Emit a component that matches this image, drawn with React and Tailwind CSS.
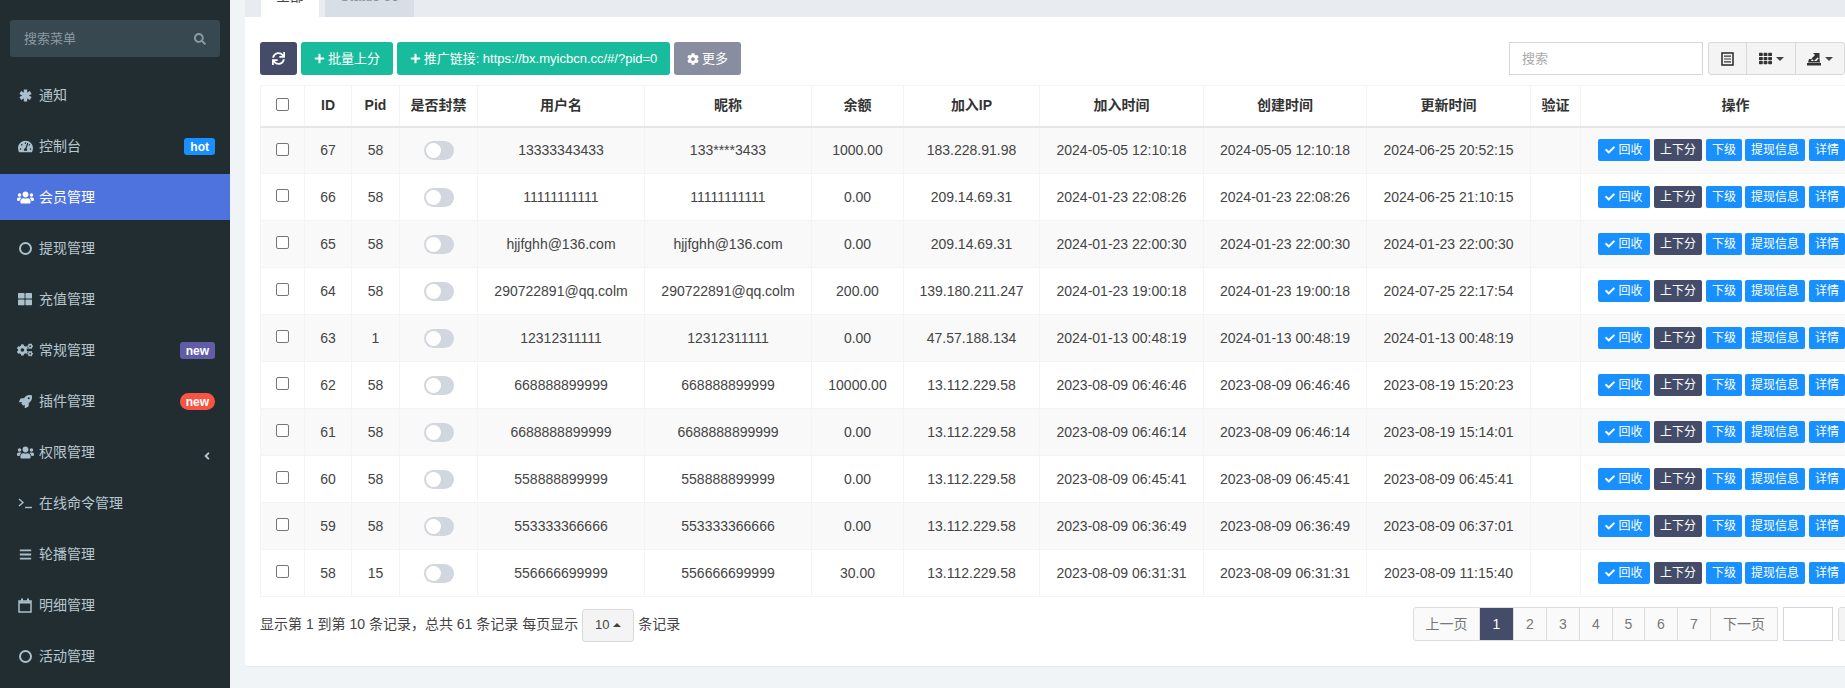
import React from 'react';
import { FaTachometerAlt, FaUsers, FaThLarge, FaCogs, FaRocket, FaBars, FaSync, FaPlus, FaCog, FaCheck, FaSearch, FaTh, FaAngleLeft } from 'react-icons/fa';

const fontStack = "font-['Liberation_Sans','Noto_Sans_CJK_SC',sans-serif]";

const Terminal = () => (
  <svg width="15" height="12" viewBox="0 0 15 12" fill="none" stroke="currentColor" strokeWidth="1.4">
    <path d="M1 2l4 3.5L1 9" />
    <path d="M7 10.5h7" />
  </svg>
);

const Asterisk = () => (
  <svg width="13" height="13" viewBox="0 0 13 13" fill="none" stroke="currentColor" strokeWidth="3.4">
    <path d="M6.5 .5v12" />
    <path d="M1.3 3.5l10.4 6" />
    <path d="M11.7 3.5l-10.4 6" />
  </svg>
);

const Ring = () => <span className="block w-[13px] h-[13px] rounded-full border-[2.5px] border-current" />;

const CalendarO = () => (
  <svg width="14" height="15" viewBox="0 0 14 15" fill="none" stroke="currentColor">
    <rect x="1" y="3" width="12" height="11" strokeWidth="1.5" />
    <path d="M1 4.5h12" strokeWidth="2" />
    <path d="M4 .5v3M10 .5v3" strokeWidth="2" />
  </svg>
);

const ListAlt = () => (
  <svg width="13" height="14" viewBox="0 0 13 14" fill="none" stroke="currentColor">
    <rect x="1" y="1" width="11" height="12" strokeWidth="1.6" />
    <path d="M3 4.2h7M3 7h7M3 9.8h7" strokeWidth="1.2" />
  </svg>
);

const ExportIcon = () => (
  <svg width="14" height="14" viewBox="0 0 14 14" fill="currentColor">
    <path d="M0 11h14v2.5H0z" />
    <path d="M2 7h3L4 9h5.5L11 7h1.5l.5 3.5H1z" />
    <path d="M4.5 6.5L8 3 6 1h6.5v6.5l-2-2L7 9z" />
  </svg>
);

const CaretDown = () => <span className="w-0 h-0 border-x-[4px] border-t-[4px] border-x-transparent border-t-[#444]" />;
const CaretUp = () => <span className="w-0 h-0 border-x-[4px] border-b-[4px] border-x-transparent border-b-[#444]" />;

const menu = [
  { label: '通知', icon: <Asterisk /> },
  { label: '控制台', icon: <FaTachometerAlt size={15} />, badge: 'hot', badgeClass: 'bg-[#1890ff] rounded-[3px] px-[6px]' },
  { label: '会员管理', icon: <FaUsers size={17} />, active: true },
  { label: '提现管理', icon: <Ring /> },
  { label: '充值管理', icon: <FaThLarge size={14} /> },
  { label: '常规管理', icon: <FaCogs size={16} />, badge: 'new', badgeClass: 'bg-[#605ca8] rounded-[3px] px-[6px]' },
  { label: '插件管理', icon: <FaRocket size={13} />, badge: 'new', badgeClass: 'bg-[#f75444] rounded-full px-[6px]' },
  { label: '权限管理', icon: <FaUsers size={17} />, chevron: true },
  { label: '在线命令管理', icon: <Terminal /> },
  { label: '轮播管理', icon: <FaBars size={13} /> },
  { label: '明细管理', icon: <CalendarO /> },
  { label: '活动管理', icon: <Ring /> },
];

const rows = [
  [67, 58, '13333343433', '133****3433', '1000.00', '183.228.91.98', '2024-05-05 12:10:18', '2024-05-05 12:10:18', '2024-06-25 20:52:15'],
  [66, 58, '11111111111', '11111111111', '0.00', '209.14.69.31', '2024-01-23 22:08:26', '2024-01-23 22:08:26', '2024-06-25 21:10:15'],
  [65, 58, 'hjjfghh@136.com', 'hjjfghh@136.com', '0.00', '209.14.69.31', '2024-01-23 22:00:30', '2024-01-23 22:00:30', '2024-01-23 22:00:30'],
  [64, 58, '290722891@qq.colm', '290722891@qq.colm', '200.00', '139.180.211.247', '2024-01-23 19:00:18', '2024-01-23 19:00:18', '2024-07-25 22:17:54'],
  [63, 1, '12312311111', '12312311111', '0.00', '47.57.188.134', '2024-01-13 00:48:19', '2024-01-13 00:48:19', '2024-01-13 00:48:19'],
  [62, 58, '668888899999', '668888899999', '10000.00', '13.112.229.58', '2023-08-09 06:46:46', '2023-08-09 06:46:46', '2023-08-19 15:20:23'],
  [61, 58, '6688888899999', '6688888899999', '0.00', '13.112.229.58', '2023-08-09 06:46:14', '2023-08-09 06:46:14', '2023-08-19 15:14:01'],
  [60, 58, '558888899999', '558888899999', '0.00', '13.112.229.58', '2023-08-09 06:45:41', '2023-08-09 06:45:41', '2023-08-09 06:45:41'],
  [59, 58, '553333366666', '553333366666', '0.00', '13.112.229.58', '2023-08-09 06:36:49', '2023-08-09 06:36:49', '2023-08-09 06:37:01'],
  [58, 15, '556666699999', '556666699999', '30.00', '13.112.229.58', '2023-08-09 06:31:31', '2023-08-09 06:31:31', '2023-08-09 11:15:40'],
];

const headers = ['ID', 'Pid', '是否封禁', '用户名', '昵称', '余额', '加入IP', '加入时间', '创建时间', '更新时间', '验证', '操作'];

const Checkbox = () => (
  <span className="inline-block w-[13px] h-[13px] mb-1 border border-[#767676] rounded-[2px] bg-white align-middle" />
);

const Toggle = () => (
  <span className="inline-flex items-center w-[30px] h-[19px] mb-[1px] rounded-full bg-[#d2d6de] pl-[2px] align-middle">
    <span className="w-[15px] h-[15px] rounded-full bg-white" />
  </span>
);

const RowButton = ({ dark, children, className }) => (
  <span className={`inline-flex items-center justify-center h-[22px] rounded-[2px] text-white text-[12px] shrink-0 ${dark ? 'bg-[#444c69]' : 'bg-[#1890ff]'} ${className}`}>
    {children}
  </span>
);

const Sidebar = () => (
  <aside className="w-[230px] shrink-0 bg-[#222d32] flex flex-col">
    <div className="mt-5 mx-[10px] h-[37px] rounded-[3px] bg-[#374850] flex items-center justify-between pl-[14px] pr-[14px] text-[#8b9aa1] text-[13px]">
      <span>搜索菜单</span>
      <FaSearch size={12} />
    </div>
    <nav className="mt-[15px] flex flex-col gap-[5px]">
      {menu.map((item) => (
        <div
          key={item.label}
          className={`relative h-[46px] flex items-center text-[14px] ${item.active ? 'bg-[#4e73df] text-white' : 'text-[#b8c7ce]'}`}
        >
          <span className={`w-[50px] flex justify-center items-center shrink-0 -mr-[11px] ${item.active ? 'text-white' : 'text-[#a9c0cc]'}`}>{item.icon}</span>
          <span>{item.label}</span>
          {item.badge && (
            <span className={`absolute right-[15px] top-[15px] h-[17px] flex items-center text-white text-[12px] font-bold ${item.badgeClass}`}>
              {item.badge}
            </span>
          )}
          {item.chevron && <FaAngleLeft size={12} className="absolute right-[17px] top-[21px]" />}
        </div>
      ))}
    </nav>
  </aside>
);

const Toolbar = () => (
  <div className="flex items-stretch h-[33px] text-white text-[13px]">
    <span className="w-[37px] rounded-[3px] bg-[#444c69] flex items-center justify-center"><FaSync size={13} /></span>
    <span className="ml-1 w-[92px] rounded-[3px] bg-[#18bc9c] flex items-center justify-center gap-[3px]"><FaPlus size={11} />批量上分</span>
    <span className="ml-1 w-[273px] rounded-[3px] bg-[#18bc9c] flex items-center justify-center gap-[3px]"><FaPlus size={11} />推广链接: https://bx.myicbcn.cc/#/?pid=0</span>
    <span className="ml-1 w-[67px] rounded-[3px] bg-[#888ea0] flex items-center justify-center gap-[3px]"><FaCog size={12} />更多</span>
    <span className="ml-auto w-[194px] border border-[#d2d6de] text-[#a9a9a9] flex items-center pl-3">搜索</span>
    <div className="ml-[5px] w-[137px] flex rounded-[3px] border border-[#d9d9d9] bg-[#f4f4f4] text-[#333]">
      <span className="w-[38px] flex items-center justify-center border-r border-[#d9d9d9]"><ListAlt /></span>
      <span className="w-[49px] flex items-center justify-center gap-1 border-r border-[#d9d9d9]"><FaTh size={13} /><CaretDown /></span>
      <span className="flex-1 flex items-center justify-center gap-1"><ExportIcon /><CaretDown /></span>
    </div>
  </div>
);

const Table = () => (
  <table className="mt-[10px] table-fixed border-collapse w-[1630px] text-[14px] text-[#444]">
    <colgroup>
      <col className="w-[44px]" /><col className="w-[47px]" /><col className="w-[48px]" /><col className="w-[78px]" />
      <col className="w-[167px]" /><col className="w-[167px]" /><col className="w-[92px]" /><col className="w-[136px]" />
      <col className="w-[164px]" /><col className="w-[163px]" /><col className="w-[164px]" /><col className="w-[50px]" />
      <col className="w-[310px]" />
    </colgroup>
    <thead>
      <tr className="h-[41px]">
        <th className="border border-[#f4f4f4] border-b-2 border-b-[#e6e6e6]"><Checkbox /></th>
        {headers.map((h) => (
          <th key={h} className="border border-[#f4f4f4] border-b-2 border-b-[#e6e6e6] font-bold text-[#333]">{h}</th>
        ))}
      </tr>
    </thead>
    <tbody>
      {rows.map((r, i) => (
        <tr key={r[0]} className={`h-[47px] ${i % 2 === 0 ? 'bg-[#f9f9f9]' : 'bg-white'}`}>
          <td className="border border-[#f4f4f4] text-center"><Checkbox /></td>
          <td className="border border-[#f4f4f4] text-center">{r[0]}</td>
          <td className="border border-[#f4f4f4] text-center">{r[1]}</td>
          <td className="border border-[#f4f4f4] text-center"><Toggle /></td>
          {r.slice(2).map((v, j) => (
            <td key={j} className="border border-[#f4f4f4] text-center">{v}</td>
          ))}
          <td className="border border-[#f4f4f4]" />
          <td className="border border-[#f4f4f4]">
            <div className="flex items-center gap-1 pl-[17px]">
              <RowButton className="w-[52px] gap-[3px]"><FaCheck size={10} />回收</RowButton>
              <RowButton dark className="w-[48px]">上下分</RowButton>
              <RowButton className="w-[36px]">下级</RowButton>
              <RowButton className="w-[60px] -ml-[1px]">提现信息</RowButton>
              <RowButton className="w-[36px]">详情</RowButton>
            </div>
          </td>
        </tr>
      ))}
    </tbody>
  </table>
);

const Pagination = () => {
  const pages = [['上一页', 'w-[67px] border-l rounded-l-[3px]'], ['1', 'w-[34px]'], ['2', 'w-[33px]'], ['3', 'w-[33px]'], ['4', 'w-[33px]'], ['5', 'w-[32px]'], ['6', 'w-[33px]'], ['7', 'w-[33px]'], ['下一页', 'w-[67px]']];
  return (
    <div className="flex items-center mt-[10px] h-[34px] text-[14px] text-[#444] w-[1625px]">
      <span>显示第 1 到第 10 条记录，总共 61 条记录 每页显示</span>
      <span className="mx-1 w-[52px] h-[33px] mt-[2px] border border-[#d9d9d9] rounded-[3px] bg-[#f4f4f4] flex items-center justify-center gap-1 text-[13px]">10<CaretUp /></span>
      <span>条记录</span>
      <div className="ml-auto flex h-[34px]">
        {pages.map(([p, w]) => (
          <span
            key={p}
            className={`${w} flex items-center justify-center border-y border-r border-[#ddd] ${p === '1' ? 'bg-[#444c69] border-[#444c69] text-white' : 'bg-[#fafafa] text-[#777]'}`}
          >
            {p}
          </span>
        ))}
        <span className="ml-[5px] w-[50px] border border-[#d2d6de] bg-white" />
        <span className="ml-[5px] w-[47px] border border-[#ddd] rounded-[3px] bg-[#f4f4f4]" />
      </div>
    </div>
  );
};

export default function App() {
  return (
    <div className={`flex w-[1845px] h-[688px] overflow-hidden bg-[#f1f4f6] ${fontStack}`}>
      <Sidebar />
      <main className="ml-[15px] flex-1 min-w-0">
        <div className="h-[17px] bg-[#e8ecf0] flex pl-[16px] text-[14px]">
          <span className="w-[58px] bg-white text-[#444] flex items-end justify-center leading-none overflow-hidden"><span className="mb-[14px]">全部</span></span>
          <span className="ml-[6px] w-[89px] bg-[#d8dee6] text-[#8a949c] flex items-end justify-center leading-none overflow-hidden"><span className="mb-[14px]">Status 50</span></span>
        </div>
        <div className="h-[650px] w-[1615px] bg-white rounded-b-[3px] border-b border-[#e6e9ec] px-[15px] pt-[25px]">
          <div className="w-[1585px]">
            <Toolbar />
          </div>
          <Table />
          <Pagination />
        </div>
      </main>
    </div>
  );
}
